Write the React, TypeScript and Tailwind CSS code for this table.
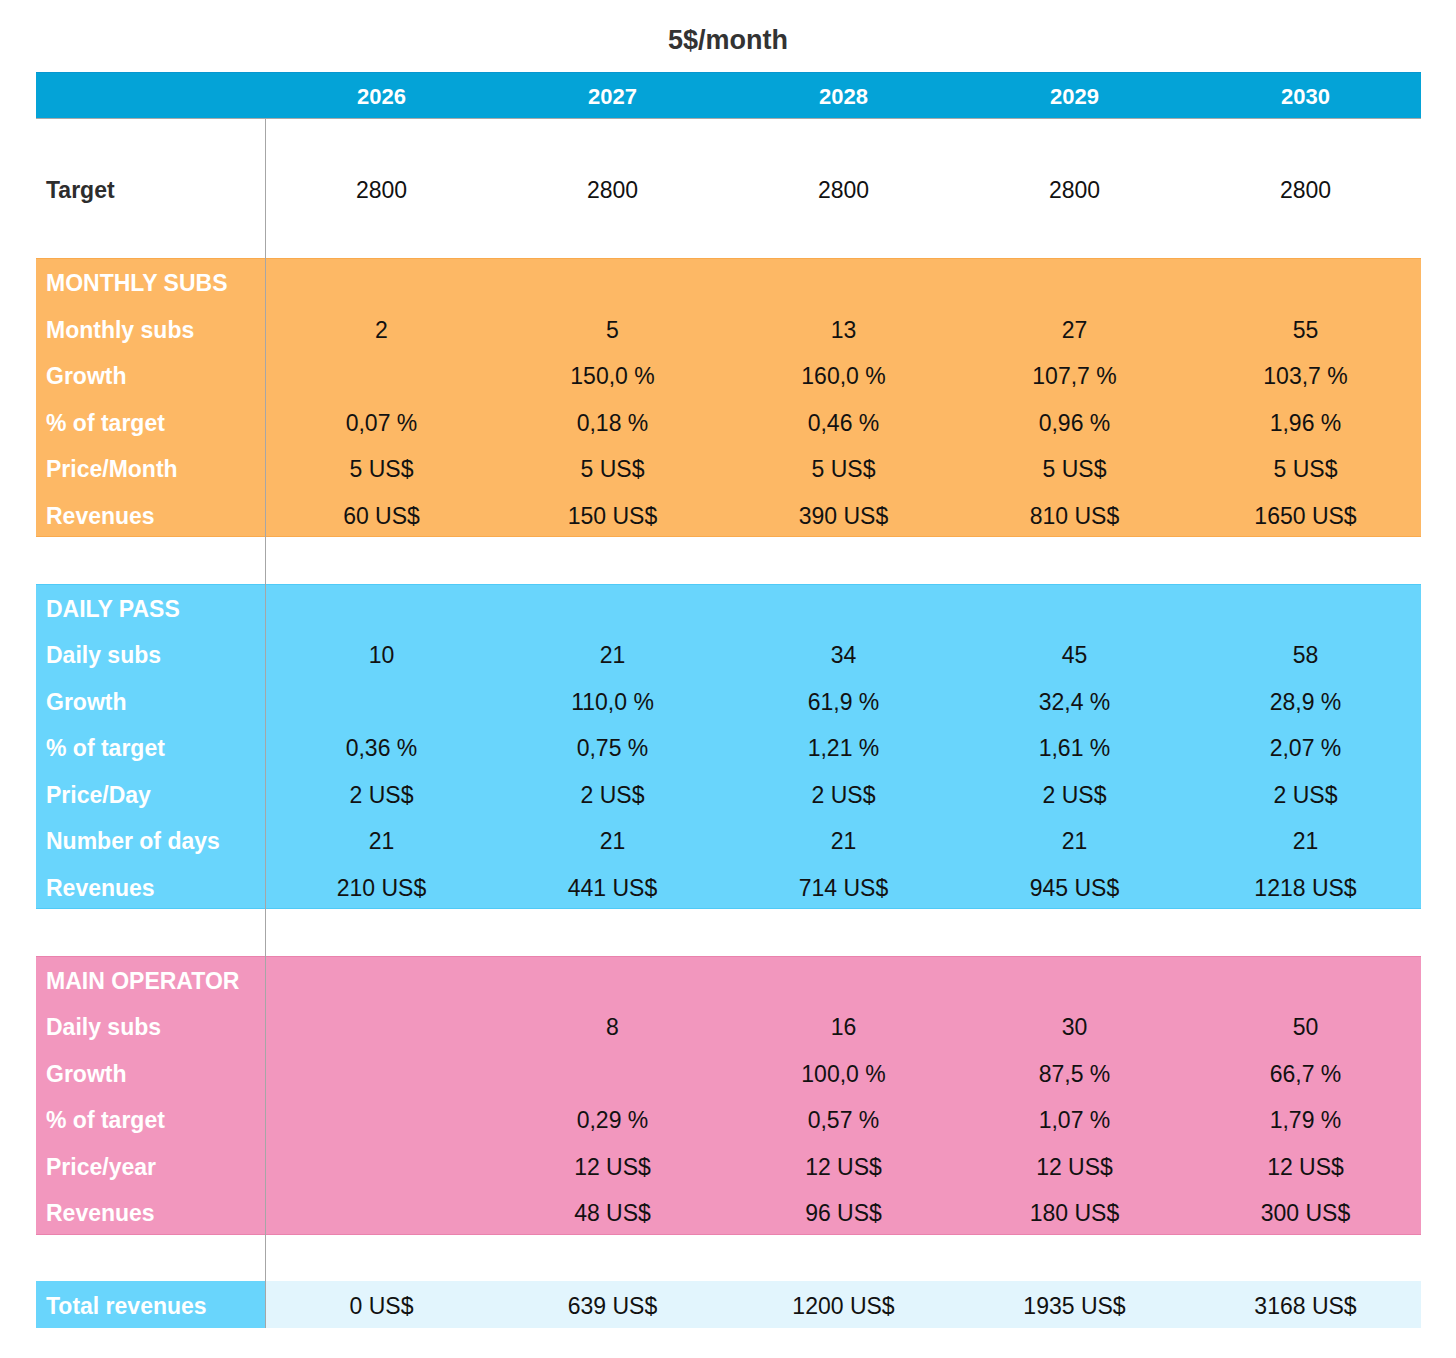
const FONT = "font-['Liberation_Sans',Arial,sans-serif]";

type Section = {
  title: string;
  bg: string;
  edge: string;
  rows: [string, string[]][];
};

const sections: Section[] = [
  {
    title: 'MONTHLY SUBS',
    bg: 'bg-[#fdb865]',
    edge: 'shadow-[inset_0_1px_0_#f9aa4e,inset_0_-1px_0_#f9aa4e]',
    rows: [
      ['Monthly subs', ['2', '5', '13', '27', '55']],
      ['Growth', ['', '150,0 %', '160,0 %', '107,7 %', '103,7 %']],
      ['% of target', ['0,07 %', '0,18 %', '0,46 %', '0,96 %', '1,96 %']],
      ['Price/Month', ['5 US$', '5 US$', '5 US$', '5 US$', '5 US$']],
      ['Revenues', ['60 US$', '150 US$', '390 US$', '810 US$', '1650 US$']],
    ],
  },
  {
    title: 'DAILY PASS',
    bg: 'bg-[#69d5fc]',
    edge: 'shadow-[inset_0_1px_0_#4fcaf7,inset_0_-1px_0_#4fcaf7]',
    rows: [
      ['Daily subs', ['10', '21', '34', '45', '58']],
      ['Growth', ['', '110,0 %', '61,9 %', '32,4 %', '28,9 %']],
      ['% of target', ['0,36 %', '0,75 %', '1,21 %', '1,61 %', '2,07 %']],
      ['Price/Day', ['2 US$', '2 US$', '2 US$', '2 US$', '2 US$']],
      ['Number of days', ['21', '21', '21', '21', '21']],
      ['Revenues', ['210 US$', '441 US$', '714 US$', '945 US$', '1218 US$']],
    ],
  },
  {
    title: 'MAIN OPERATOR',
    bg: 'bg-[#f297be]',
    edge: 'shadow-[inset_0_1px_0_#ea82ad,inset_0_-1px_0_#ea82ad]',
    rows: [
      ['Daily subs', ['', '8', '16', '30', '50']],
      ['Growth', ['', '', '100,0 %', '87,5 %', '66,7 %']],
      ['% of target', ['', '0,29 %', '0,57 %', '1,07 %', '1,79 %']],
      ['Price/year', ['', '12 US$', '12 US$', '12 US$', '12 US$']],
      ['Revenues', ['', '48 US$', '96 US$', '180 US$', '300 US$']],
    ],
  },
];

const years = ['2026', '2027', '2028', '2029', '2030'];
const totals = ['0 US$', '639 US$', '1200 US$', '1935 US$', '3168 US$'];

const ROW = 'grid grid-cols-[230px_repeat(5,231px)] h-[46.5px]';
const LABEL = 'flex items-center pl-[10px] pt-[4px] border-r border-[#a6a6a6]';
const CELL = 'flex items-center justify-center pt-[4px] text-[23px] text-[#111]';

function Row({ label, values }: { label: string; values: string[] }) {
  return (
    <div className={ROW}>
      <div className={`${LABEL} text-white text-[23px] font-bold`}>{label}</div>
      {values.map((v, i) => (
        <div key={i} className={CELL}>
          {v}
        </div>
      ))}
    </div>
  );
}

function BlankRow() {
  return (
    <div className={ROW}>
      <div className={LABEL} />
    </div>
  );
}

export default function App() {
  return (
    <div className={`${FONT} bg-white w-[1456px] h-[1358px] antialiased`}>
      <div className="h-[72px] flex items-center justify-center pt-[8px]">
        <h1 className="text-[27px] font-bold text-[#333]">5$/month</h1>
      </div>

      <div className="ml-[36px] w-[1385px]">
        <div className={`${ROW} bg-[#04a3d7] shadow-[inset_0_1px_0_#0896d0,inset_0_-1px_0_#a9a9a9]`}>
          <div />
          {years.map((y) => (
            <div key={y} className="flex items-center justify-center pt-[2px] text-[22px] font-bold text-white">
              {y}
            </div>
          ))}
        </div>

        <div className="grid grid-cols-[230px_repeat(5,231px)] h-[139.5px]">
          <div className={`${LABEL} text-[23px] font-bold text-[#2d2d2d]`}>Target</div>
          {years.map((y) => (
            <div key={y} className={CELL}>
              2800
            </div>
          ))}
        </div>

        {sections.map((s) => (
          <div key={s.title}>
            <div className={`${s.bg} ${s.edge}`}>
              <Row label={s.title} values={[]} />
              {s.rows.map(([label, values]) => (
                <Row key={label} label={label} values={values} />
              ))}
            </div>
            <BlankRow />
          </div>
        ))}

        <div className={ROW}>
          <div className={`${LABEL} bg-[#69d5fc] text-white text-[23px] font-bold`}>Total revenues</div>
          {totals.map((v, i) => (
            <div key={i} className={`${CELL} bg-[#e2f5fd]`}>
              {v}
            </div>
          ))}
        </div>
      </div>
    </div>
  );
}
